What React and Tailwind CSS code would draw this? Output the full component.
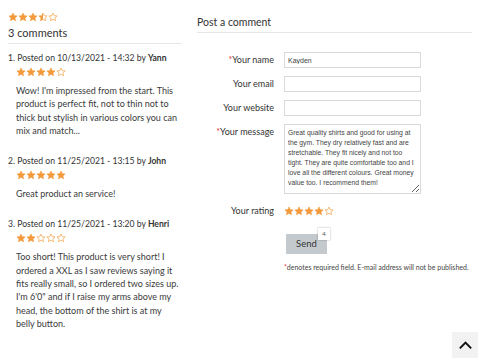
import { useState } from "react";

const Star = ({ type }) => (
  <svg viewBox="0 0 24 24" className="w-[10px] h-[10px]">
    <defs>
      <linearGradient id="half">
        <stop offset="50%" stopColor="#f39a3c" />
        <stop offset="50%" stopColor="#ffffff" />
      </linearGradient>
    </defs>
    <path
      d="M12 2.5l2.9 6.3 6.9.7-5.2 4.6 1.5 6.8L12 17.4l-6.1 3.5 1.5-6.8-5.2-4.6 6.9-.7z"
      fill={type === "full" ? "#f39a3c" : type === "half" ? "url(#half)" : "#ffffff"}
      stroke="#f39a3c"
      strokeWidth="1.6"
      strokeLinejoin="round"
    />
  </svg>
);

const Stars = ({ value }) => (
  <div className="flex">
    {[1, 2, 3, 4, 5].map((i) => (
      <Star key={i} type={value >= i ? "full" : value >= i - 0.5 ? "half" : "empty"} />
    ))}
  </div>
);

const comments = [
  {
    date: "10/13/2021 - 14:32",
    name: "Yann",
    rating: 4,
    text: "Wow! I'm impressed from the start. This product is perfect fit, not to thin not to thick but stylish in various colors you can mix and match...",
  },
  {
    date: "11/25/2021 - 13:15",
    name: "John",
    rating: 5,
    text: "Great product an service!",
  },
  {
    date: "11/25/2021 - 13:20",
    name: "Henri",
    rating: 2,
    text: "Too short! This product is very short! I ordered a XXL as I saw reviews saying it fits really small, so I ordered two sizes up. I'm 6'0\" and if I raise my arms above my head, the bottom of the shirt is at my belly button.",
  },
];

const Label = ({ children, required }) => (
  <div className="text-right text-[9px] leading-[16px] text-[#333]">
    {required && <span className="text-[#e53935]">*</span>}
    {children}
  </div>
);

export default function App() {
  const [name, setName] = useState("Kayden");
  const [message, setMessage] = useState(
    "Great quality shirts and good for using at the gym. They dry relatively fast and are stretchable. They fit nicely and not too tight. They are quite comfortable too and I love all the different colours. Great money value too. I recommend them!"
  );

  return (
    <div className="relative min-h-[361px] w-[480px] bg-white font-['Lato',sans-serif] text-[#333]">
      <div className="flex gap-[15px] px-[8px] pt-[12px]">
        <div className="w-[174px] flex flex-col">
          <Stars value={3.5} />
          <h2 className="mt-[3px] text-[11px] leading-[16px] text-[#333]">3 comments</h2>
          <div className="mt-[2px] h-px bg-[#e6e6e6]" />
          <ol className="mt-[8px] flex flex-col gap-[18px]">
            {comments.map((c, i) => (
              <li key={i} className="flex flex-col">
                <div className="text-[8.6px] leading-[13px] text-[#333]">
                  {i + 1}. Posted on {c.date} by <b>{c.name}</b>
                </div>
                <div className="pl-[8px] mt-[2px]">
                  <Stars value={c.rating} />
                </div>
                <p className="pl-[8px] mt-[7px] text-[9px] leading-[13.3px] text-[#3a3a3a]">{c.text}</p>
              </li>
            ))}
          </ol>
        </div>

        <div className="w-[275px] flex flex-col">
          <h2 className="mt-[2px] text-[10.5px] leading-[16px] text-[#333]">Post a comment</h2>
          <div className="mt-[2px] h-px bg-[#e6e6e6]" />
          <div className="mt-[19px] grid grid-cols-[77px_137px] gap-x-[10px] gap-y-[8px]">
            <Label required>Your name</Label>
            <input
              value={name}
              onChange={(e) => setName(e.target.value)}
              className="h-[16px] border border-[#d9d9d9] px-[3px] text-[7px] font-['Liberation_Sans',sans-serif] text-[#444] outline-none"
            />
            <Label>Your email</Label>
            <input className="h-[16px] border border-[#d9d9d9] px-[3px] text-[7px] outline-none" />
            <Label>Your website</Label>
            <input className="h-[16px] border border-[#d9d9d9] px-[3px] text-[7px] outline-none" />
            <Label required>Your message</Label>
            <textarea
              value={message}
              onChange={(e) => setMessage(e.target.value)}
              className="block h-[70px] border border-[#d9d9d9] px-[3px] py-[3px] text-[6.8px] leading-[10px] font-['Liberation_Sans',sans-serif] text-[#444] outline-none resize-y"
            />
            <div className="mt-[1px]">
              <Label>Your rating</Label>
            </div>
            <div className="mt-[1px] flex items-center h-[16px]">
              <Stars value={4} />
            </div>
          </div>
          <div className="mt-[15px] pl-[87px] flex flex-col items-start">
            <div className="relative ml-[2px] flex">
              <button className="w-[41px] h-[20px] bg-[#c4c9cd] text-[9.5px] leading-[20px] text-[#333]">Send</button>
              <span className="absolute -top-[6px] -right-[3px] w-[12px] h-[12px] bg-white shadow-[0_0_2px_rgba(0,0,0,0.3)] text-[6px] leading-[12px] text-center text-[#555]">
                4
              </span>
            </div>
            <p className="mt-[8px] whitespace-nowrap text-[7px] leading-[10px] text-[#444]">
              <span className="text-[#e53935]">*</span>denotes required field. E-mail address will not be published.
            </p>
          </div>
        </div>
      </div>

      <button className="fixed right-[2px] bottom-[3px] w-[26px] h-[26px] bg-[#f2f2f2] flex items-center justify-center">
        <svg viewBox="0 0 24 24" className="w-[17px] h-[17px]" fill="none" stroke="#111" strokeWidth="2.8">
          <path d="M4 16l8-8 8 8" />
        </svg>
      </button>
    </div>
  );
}
